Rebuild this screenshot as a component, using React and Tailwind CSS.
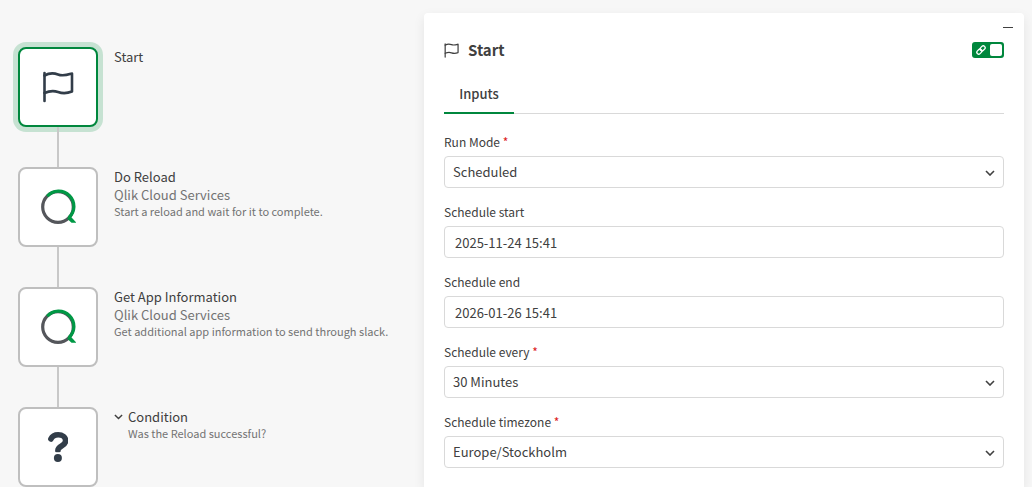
import { useState } from "react";

const steps = [
  { id: "start", icon: "flag", title: "Start", active: true },
  {
    id: "reload",
    icon: "qlik",
    title: "Do Reload",
    connector: "Qlik Cloud Services",
    comment: "Start a reload and wait for it to complete.",
  },
  {
    id: "app-info",
    icon: "qlik",
    title: "Get App Information",
    connector: "Qlik Cloud Services",
    comment: "Get additional app information to send through slack.",
  },
  {
    id: "condition",
    icon: "question",
    title: "Condition",
    comment: "Was the Reload successful?",
    collapsible: true,
  },
];

const fields = [
  { name: "mode", label: "Run Mode", required: true, options: ["Scheduled", "Manual", "Triggered"] },
  { name: "start", label: "Schedule start", value: "2025-11-24 15:41" },
  { name: "end", label: "Schedule end", value: "2026-01-26 15:41" },
  { name: "every", label: "Schedule every", required: true, options: ["30 Minutes", "1 Hour", "1 Day"] },
  { name: "timezone", label: "Schedule timezone", required: true, options: ["Europe/Stockholm", "Europe/London", "UTC"] },
];

function FlagIcon({ className, strokeWidth = 2 }) {
  return (
    <svg viewBox="0 0 32 32" className={className} fill="none" stroke="currentColor" strokeWidth={strokeWidth} strokeLinecap="round" strokeLinejoin="round" aria-hidden="true">
      <path d="M2.500 2v28" />
      <path d="M2.500 4.500C7 2 11 1.500 16 3.500C21 5.500 25 4 30 2.500V20.500C25 22.500 21 22.800 16 21C11 19.200 7 20 2.500 22" />
    </svg>
  );
}

function QlikIcon() {
  return (
    <svg viewBox="0 0 36 36" className="size-9" fill="none" aria-hidden="true">
      <circle cx="18" cy="18" r="15.300" stroke="#54565b" strokeWidth="3.200" />
      <path d="M7.200 7.200A15.300 15.300 0 1 1 28.800 28.800" stroke="#009845" strokeWidth="3.200" />
      <path d="M27 29.600L30.200 27L36.500 33.800H31.500Z" fill="#009845" />
    </svg>
  );
}

function QuestionIcon() {
  return (
    <svg viewBox="0 0 20 30" className="h-[30px] w-5" fill="none" aria-hidden="true">
      <path d="M2.900 7C4.300 4 6.900 2.800 10.200 2.800C14.500 2.800 17.600 5.200 17.600 8.800C17.600 14.500 9.900 13.500 9.900 18.500" stroke="#323d49" strokeWidth="5.600" strokeLinecap="round" />
      <rect x="0" y="20.200" width="20" height="3" fill="#fff" />
      <circle cx="9.900" cy="26" r="4" fill="#323d49" />
    </svg>
  );
}

function Chevron({ className }) {
  return (
    <svg viewBox="0 0 10 6" className={className} fill="none" stroke="currentColor" strokeWidth="1.600" aria-hidden="true">
      <path d="M1 1L5 5L9 1" />
    </svg>
  );
}

function Step({ step, last }) {
  const indent = step.collapsible ? "pl-[14px]" : "";

  return (
    <li className="flex gap-4">
      <div className="flex flex-col items-center">
        <button
          type="button"
          aria-label={step.title}
          className={
            step.active
              ? "flex size-20 items-center justify-center rounded-lg border-2 border-[#00873d] bg-white text-[#323d49] ring-5 ring-[#c6e2d2]"
              : "flex size-20 items-center justify-center rounded-lg border-2 border-[#bfbfbf] bg-white text-[#323d49]"
          }
        >
          {step.icon === "flag" && <FlagIcon className="size-8" strokeWidth={2.6} />}
          {step.icon === "qlik" && <QlikIcon />}
          {step.icon === "question" && <QuestionIcon />}
        </button>
        {!last && <div className="z-10 h-10 w-[2px] bg-[#c8c8c8]" />}
      </div>

      <div className="pt-[1px]">
        <div className="flex items-center text-[13px] leading-[18px] text-[#404040]">
          {step.collapsible && (
            <button type="button" aria-label="Collapse condition" className="w-[14px]">
              <Chevron className="w-[9px]" />
            </button>
          )}
          <span>{step.title}</span>
        </div>
        {step.connector && (
          <p className="text-[13px] leading-[18px] text-[#737373]">{step.connector}</p>
        )}
        {step.comment && (
          <p className={`text-[11px] leading-[14px] text-[#737373] ${indent}`}>{step.comment}</p>
        )}
      </div>
    </li>
  );
}

function Field({ field }) {
  return (
    <div>
      <label htmlFor={field.name} className="block text-[12px] leading-4">
        {field.label}
        {field.required && <span className="text-[#dc2020]"> *</span>}
      </label>
      <div className="relative mt-[6px]">
        {field.options ? (
          <>
            <select
              id={field.name}
              className="block h-8 w-full appearance-none rounded border border-[#d9d9d9] bg-white px-2 text-[13px] outline-none"
            >
              {field.options.map((option) => (
                <option key={option}>{option}</option>
              ))}
            </select>
            <Chevron className="pointer-events-none absolute top-[14px] right-[9px] w-[10px]" />
          </>
        ) : (
          <input
            id={field.name}
            type="text"
            defaultValue={field.value}
            className="block h-8 w-full rounded border border-[#d9d9d9] bg-white px-[10px] text-[13px] outline-none"
          />
        )}
      </div>
    </div>
  );
}

export default function App() {
  const [linked, setLinked] = useState(true);

  return (
    <div className="flex min-h-screen bg-[#f7f7f7] font-['Noto_Sans_CJK_JP',sans-serif] text-[#404040]">
      <ol className="w-[424px] shrink-0 pt-[47px] pl-[18px]">
        {steps.map((step, i) => (
          <Step key={step.id} step={step} last={i === steps.length - 1} />
        ))}
      </ol>

      <aside className="flex min-w-0 flex-1 pt-[13px] pr-2">
        <section className="min-w-0 flex-1 rounded-t bg-white px-5 shadow-[0_4px_12px_rgba(0,0,0,0.08)]">
          <div className="-mr-[14px] flex h-[29px] justify-end">
            <button type="button" aria-label="Minimize" className="flex h-7 w-5 items-center justify-center">
              <span className="h-[1px] w-[10px] bg-[#404040]" />
            </button>
          </div>

          <header className="flex h-4 items-center">
            <FlagIcon className="size-[15px]" strokeWidth={2.6} />
            <h2 className="ml-[9px] text-[15px] font-bold">Start</h2>
            <label className="relative ml-auto flex h-4 w-8 cursor-pointer items-center justify-between rounded-[3px] bg-[#00873d] pr-[2px] pl-1">
              <input
                type="checkbox"
                aria-label="Link inputs"
                checked={linked}
                onChange={(e) => setLinked(e.target.checked)}
                className="absolute inset-0 cursor-pointer appearance-none"
              />
              <svg viewBox="0 0 20 20" className="size-[10px]" fill="none" stroke="#fff" strokeWidth="2.600" aria-hidden="true">
                <rect x="-5.500" y="-3.800" width="11" height="7.600" rx="3.800" transform="translate(6.700 13.300) rotate(-45)" />
                <rect x="-5.500" y="-3.800" width="11" height="7.600" rx="3.800" transform="translate(13.300 6.700) rotate(-45)" />
              </svg>
              <span className="size-3 rounded-[2px] bg-white" />
            </label>
          </header>

          <div role="tablist" className="mt-[18px] flex border-b border-[#d9d9d9]">
            <button
              type="button"
              role="tab"
              aria-selected="true"
              className="-mb-[1px] h-[38px] w-[70px] border-b-2 border-[#00873d] text-[13px] font-medium"
            >
              Inputs
            </button>
          </div>

          <form className="flex flex-col gap-4 pt-5 pb-4">
            {fields.map((field) => (
              <Field key={field.name} field={field} />
            ))}
          </form>
        </section>
      </aside>
    </div>
  );
}
